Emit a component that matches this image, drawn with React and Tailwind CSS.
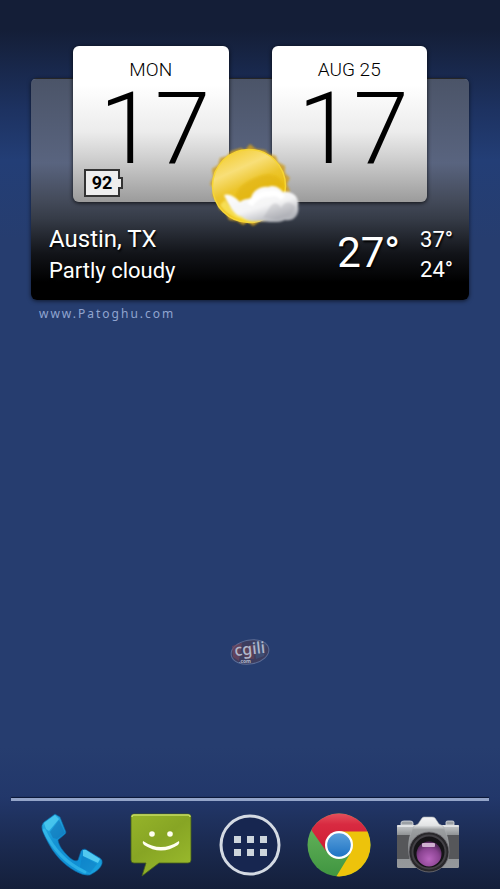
import React from 'react';

const FlipCard = ({ label, value, children }) => (
  <div className="relative h-39 flex-1 rounded-md bg-[linear-gradient(#fff_25%,#ececec_55%,#cfcfcf_72%,#9b9b9b)] text-center text-black shadow-[0_1px_4px_rgba(0,0,0,0.8)]">
    <p className="pt-3 text-[19px] leading-6 font-light">{label}</p>
    <p className="pl-2 text-[100px] leading-[94px] font-light">{value}</p>
    {children}
  </div>
);

const Battery = ({ level }) => (
  <div className="absolute bottom-[5px] left-[11px] flex items-center">
    <span className="flex h-7 w-9 items-center justify-center border-2 border-[#333] bg-[#eee] text-lg leading-none font-bold">
      {level}
    </span>
    <span className="-ml-0.5 h-3 w-[5px] border-2 border-l-0 border-[#333] bg-[#eee]" />
  </div>
);

const PartlyCloudy = () => (
  <svg viewBox="0 0 94 90" className="h-[90px] w-[94px]" aria-label="Partly cloudy">
    <defs>
      <linearGradient id="sun" x1="0.2" y1="0" x2="0.65" y2="1">
        <stop offset="0" stopColor="#f3cb2c" />
        <stop offset="0.28" stopColor="#f8df78" />
        <stop offset="0.5" stopColor="#ecc52c" />
        <stop offset="0.75" stopColor="#e9bc0d" />
        <stop offset="1" stopColor="#ffe532" />
      </linearGradient>
      <linearGradient id="cloud" x1="0" y1="0" x2="0.6" y2="1">
        <stop offset="0" stopColor="#fff" />
        <stop offset="0.65" stopColor="#f4f4f5" />
        <stop offset="1" stopColor="#b4b6bc" />
      </linearGradient>
      <filter id="soft" x="-20%" y="-20%" width="140%" height="140%">
        <feGaussianBlur stdDeviation="1.3" />
      </filter>
      <filter id="glow" x="-20%" y="-20%" width="140%" height="140%">
        <feGaussianBlur stdDeviation="0.8" />
      </filter>
    </defs>
    <path
      d="M33 5 L37 7 L42 1 L48 6 L57 7 L61 11 L68 13 L70 19 L77 23 L77 30 L82 35 L79 41 L82 48 L78 54 L75 65 L66 72 L58 77 L51 79 L45 83 L40 79 L35 82 L29 78 L21 77 L18 70 L11 66 L10 59 L4 53 L6 46 L2 41 L5 34 L4 26 L10 22 L12 15 L19 13 L23 8 Z"
      fill="#cf9f20" opacity="0.85" filter="url(#glow)"
    />
    <circle cx="41" cy="43" r="36.5" fill="url(#sun)" stroke="#f6d536" strokeWidth="1.5" />
    <path d="M28 62 C24 44 42 36 55 32 C66 30 73 34 75 42 C66 54 42 56 28 62 Z" fill="#dfb008" opacity="0.5" filter="url(#soft)" />
    <path d="M12 62 C20 75 35 79 50 76 C36 74 24 68 17 57 Z" fill="#fff27a" opacity="0.6" filter="url(#soft)" />
    <g filter="url(#soft)">
      <path
        d="M16 52 C21 50 27 54 32 59 C35 56 40 56 43 55 C45 47 53 43 60 44 C66 41 72 45 75 49 C84 47 92 54 90 63 C92 72 85 79 77 77 C69 81 57 78 51 78 C43 79 37 77 34 74 C25 72 21 62 16 52 Z"
        fill="url(#cloud)"
      />
      <path d="M62 64 C66 58 70 60 73 65 C77 57 84 59 87 64 C84 75 76 73 71 76 C65 77 59 74 55 75" fill="#92949c" opacity="0.25" />
      <path d="M42 62 C46 54 55 50 61 51 C66 49 72 51 75 55" fill="none" stroke="#fff" strokeWidth="6" />
    </g>
  </svg>
);

const WeatherWidget = () => (
  <section className="relative mx-[31px] mt-[78px] rounded-md border-t border-white/15 bg-[linear-gradient(#4b5468,#59647f_38%,#454c5c_54%,#363c48_63%,#121419_79%,#000_92%)] shadow-[0_1px_4px_rgba(0,0,0,0.6)]">
    <div className="-mt-[33px] flex gap-[43px] px-[42px]">
      <FlipCard label="MON" value="17">
        <Battery level={92} />
      </FlipCard>
      <FlipCard label="AUG 25" value="17" />
    </div>
    <div className="absolute top-16 left-1/2 -ml-[42px]">
      <PartlyCloudy />
    </div>
    <div className="flex items-center pt-[22px] pr-4 pb-[14px] pl-[18px] text-white [text-shadow:1px_2px_2px_#000]">
      <div className="flex-1 leading-[31px]">
        <p className="text-2xl leading-[31px]">Austin, TX</p>
        <p className="text-[22px]">Partly cloudy</p>
      </div>
      <p className="mr-5 pb-1 text-[42px] leading-[42px]">27°</p>
      <div className="text-[22px] leading-[30px]">
        <p>37°</p>
        <p>24°</p>
      </div>
    </div>
  </section>
);

const SiteLogo = () => (
  <svg viewBox="0 0 42 34" className="h-[34px] w-[42px] overflow-visible">
    <ellipse cx="21" cy="17" rx="19" ry="12" fill="#3d3d5f" stroke="#5c6c95" transform="rotate(-10 21 17)" />
    <path d="M3 11 L13 8 L10 26 L4 22 Z" fill="#79485c" opacity="0.6" />
    <path d="M14 12 L27 9 L25 24 L16 24 Z" fill="#75444f" opacity="0.5" />
    <path d="M24 7 L37 7 L35 21 L27 24 Z" fill="#405e88" opacity="0.5" />
    <g fontFamily="Noto Sans, sans-serif" fill="#b0b8cc">
      <text x="6" y="21" fontSize="16" fontWeight="500" transform="rotate(-6 6 21)">cgili</text>
      <text x="10" y="28" fontSize="5" fontWeight="bold">.com</text>
    </g>
  </svg>
);

const PhoneIcon = () => (
  <svg viewBox="0 0 64 64" className="size-16">
    <defs>
      <linearGradient id="phone" x1="0" y1="0" x2="1" y2="1">
        <stop offset="0" stopColor="#2cb4e6" />
        <stop offset="0.35" stopColor="#1492d4" />
        <stop offset="0.7" stopColor="#0f8fd4" />
        <stop offset="1" stopColor="#1ca6e0" />
      </linearGradient>
    </defs>
    <path
      d="M15 1 L20 4 L26 19 Q26 21 24 22 L18 27 C19 33 23 38 28 43 C32 47 36 49 38 47 L41 38 Q42 36 45 36 L60 45 Q63 47 62 51 Q60 57 50 62 Q43 63 35 58 C24 52 15 42 10 33 C6 26 3 20 2 16 Q1 12 4 9 Z"
      fill="url(#phone)" stroke="#0b5f9c" strokeWidth="0.6"
    />
    <path d="M15 2 L19 6 L9 18 L6 16 L4 10 Z" fill="#52cff2" opacity="0.75" />
    <path d="M10 19 L19 7 L25 20 L17 26 L13 25 Z" fill="#126db0" opacity="0.45" />
    <path d="M4 17 C12 34 25 50 45 59" fill="none" stroke="#3fc6f2" strokeWidth="3" opacity="0.55" strokeLinecap="round" />
    <path d="M43 37 L46 37 L60 46 L58 50 L43 43 Z" fill="#62d7f6" opacity="0.8" />
    <path d="M42 43 L57 51 L50 60 L40 54 Z" fill="#0f77bd" opacity="0.4" />
  </svg>
);

const MessagesIcon = () => (
  <svg viewBox="0 0 64 64" className="size-16">
    <defs>
      <linearGradient id="bubble" x1="0" y1="0" x2="0.7" y2="1">
        <stop offset="0" stopColor="#96b42a" />
        <stop offset="0.5" stopColor="#87a524" />
        <stop offset="1" stopColor="#98b82c" />
      </linearGradient>
    </defs>
    <path d="M5 1 H59 Q62 1 62 4 V47 Q62 50 59 50 H30 L13 63 L17 50 H5 Q2 50 2 47 V4 Q2 1 5 1 Z" fill="url(#bubble)" stroke="#46611b" strokeWidth="0.8" />
    <path d="M3 4 Q3 2 5 2 H59 Q61 2 61 4" fill="none" stroke="#c6dc64" strokeWidth="1.5" />
    <circle cx="23" cy="21" r="2.8" fill="#fffff0" />
    <circle cx="41" cy="21" r="2.8" fill="#fffff0" />
    <path d="M14 28 Q32 40 50 28 Q51 30 49 32 Q32 43 15 32 Q13 30 14 28 Z" fill="#fffff0" />
  </svg>
);

const AppsIcon = () => (
  <svg viewBox="0 0 64 64" className="size-16">
    <circle cx="32" cy="32" r="29" fill="#172650" stroke="#d4dae3" strokeWidth="3" />
    <g fill="#cdd5dc">
      {[16, 29, 42].map((x) => (
        <React.Fragment key={x}>
          <rect x={x} y="23" width="7" height="7" />
          <rect x={x} y="36" width="7" height="7" />
        </React.Fragment>
      ))}
    </g>
  </svg>
);

const ChromeIcon = () => (
  <svg viewBox="0 0 64 64" className="size-16">
    <defs>
      <clipPath id="disc">
        <circle cx="32" cy="32" r="31.5" />
      </clipPath>
      <linearGradient id="red" x1="0" y1="0" x2="0" y2="1">
        <stop offset="0" stopColor="#e5525c" />
        <stop offset="0.3" stopColor="#d82a41" />
        <stop offset="1" stopColor="#cf1b32" />
      </linearGradient>
      <linearGradient id="green" x1="0" y1="0" x2="0" y2="1">
        <stop offset="0.3" stopColor="#5fae57" />
        <stop offset="1" stopColor="#3f9540" />
      </linearGradient>
      <linearGradient id="blue" x1="0" y1="0" x2="0" y2="1">
        <stop offset="0" stopColor="#5a9fdb" />
        <stop offset="1" stopColor="#1f74c4" />
      </linearGradient>
    </defs>
    <g clipPath="url(#disc)">
      <rect width="64" height="64" fill="url(#green)" />
      <path d="M32 18 H64 V64 H29 L43 41 Z" fill="#edc30b" />
      <path d="M0 0 H64 V18.5 H32 L19 38 L5 18 Z" fill="url(#red)" />
    </g>
    <circle cx="32" cy="32" r="14" fill="#fff" />
    <circle cx="32" cy="32" r="11.8" fill="url(#blue)" />
  </svg>
);

const CameraIcon = () => (
  <svg viewBox="0 0 64 64" className="size-16">
    <defs>
      <linearGradient id="metal" x1="0" y1="0" x2="0" y2="1">
        <stop offset="0" stopColor="#c9ccce" />
        <stop offset="0.25" stopColor="#8b8e90" />
        <stop offset="1" stopColor="#96999c" />
      </linearGradient>
      <linearGradient id="hump" x1="0" y1="0" x2="0" y2="1">
        <stop offset="0" stopColor="#f4f5f6" />
        <stop offset="0.2" stopColor="#e2e4e5" />
        <stop offset="0.3" stopColor="#9c9fa1" />
        <stop offset="1" stopColor="#77797c" />
      </linearGradient>
      <radialGradient id="lens" cx="0.5" cy="0.7" r="0.6">
        <stop offset="0" stopColor="#b765bd" />
        <stop offset="0.7" stopColor="#8a4391" />
        <stop offset="1" stopColor="#5b2d62" />
      </radialGradient>
    </defs>
    <path d="M5 12 V10 Q5 8 8 8 H14 Q17 8 17 10 V12 Z M50 12 V9 Q50 8 52 8 H56 Q58 8 58 9 V12 Z" fill="#9ba0a5" stroke="#dde0e3" strokeWidth="0.8" />
    <rect x="1" y="12" width="62" height="43" rx="1.5" fill="url(#metal)" />
    <rect x="1" y="12" width="62" height="2" rx="1" fill="#e0e2e4" />
    <rect x="1" y="22" width="62" height="24" fill="#56575a" />
    <path d="M26 5 Q27 4 28 4 H36 Q38 4 39 5 L43 11 L47 13 C52 22 54 33 52 46 H14 C11 33 13 22 18 13 L22 11 Z" fill="url(#hump)" stroke="#aaadb0" strokeWidth="0.6" />
    <circle cx="33" cy="39" r="20" fill="#29282b" stroke="#747278" strokeWidth="0.8" />
    <circle cx="33" cy="39" r="16.5" fill="#151417" stroke="#434146" strokeWidth="2" />
    <circle cx="33" cy="41" r="12.5" fill="url(#lens)" />
    <rect x="26" y="30" width="13" height="4" rx="1" fill="#dbbfdc" opacity="0.9" />
  </svg>
);

const DOCK = [
  { name: 'Phone', Icon: PhoneIcon },
  { name: 'Messages', Icon: MessagesIcon },
  { name: 'Apps', Icon: AppsIcon },
  { name: 'Chrome', Icon: ChromeIcon },
  { name: 'Camera', Icon: CameraIcon },
];

const App = () => (
  <div className="flex min-h-screen flex-col bg-[linear-gradient(#141e37_30px,#1d3261_110px,#233e76_160px,#263d6f_240px,#263d6f_84%,#22376a_90%)] font-[Roboto,sans-serif]">
    <WeatherWidget />
    <a href="#patoghu" className="mt-1.5 ml-[39px] self-start font-['Noto_Sans',sans-serif] text-xs leading-4 tracking-[2px] text-[#91a5d0]">
      www.Patoghu.com
    </a>
    <main className="flex flex-1 flex-col items-center justify-end pb-[129px]">
      <SiteLogo />
    </main>
    <nav className="bg-linear-to-b from-[#22376a] to-[#141f3a] pb-3">
      <div className="mx-[11px] h-[3px] bg-[#94a5c9] shadow-[0_-1px_1px_#0b1735]" />
      <div className="grid grid-cols-5 justify-items-center px-[27px] pt-3">
        {DOCK.map(({ name, Icon }) => (
          <button key={name} aria-label={name} className="cursor-pointer">
            <Icon />
          </button>
        ))}
      </div>
    </nav>
  </div>
);

export default App;
